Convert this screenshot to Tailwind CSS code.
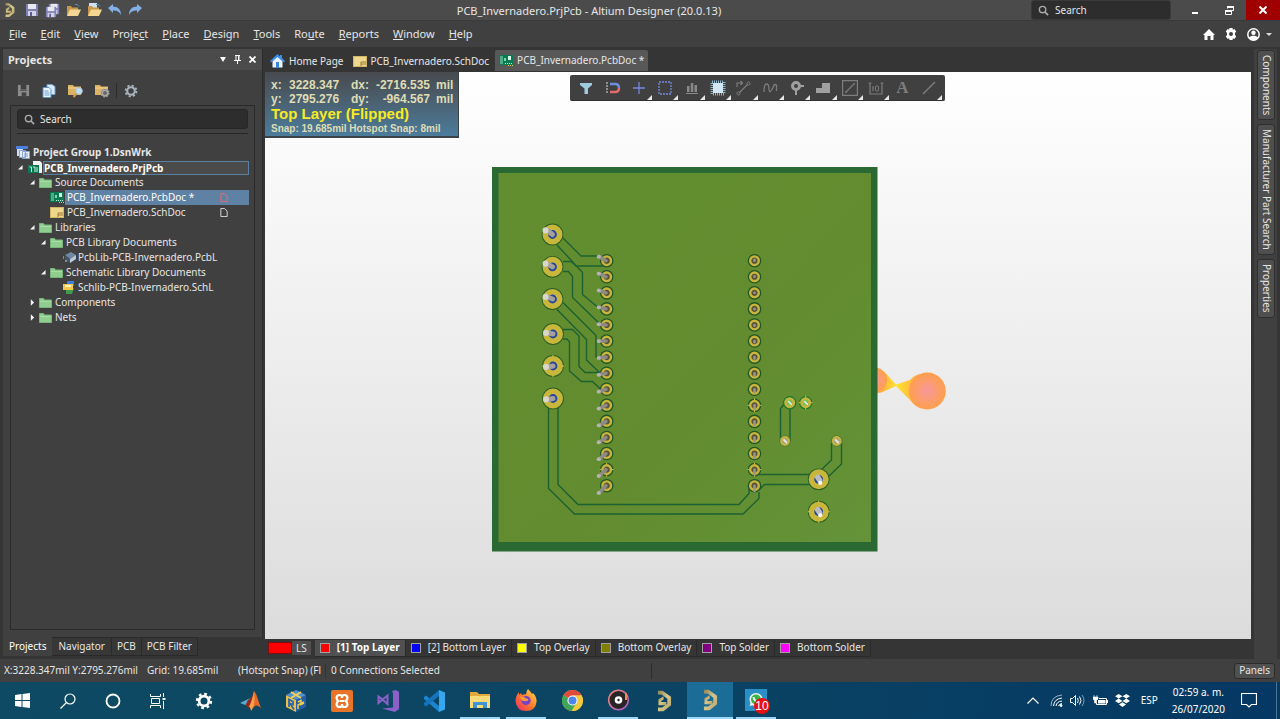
<!DOCTYPE html>
<html lang="en">
<head>
<meta charset="utf-8">
<title>PCB_Invernadero.PrjPcb - Altium Designer (20.0.13)</title>
<script src="https://cdn.jsdelivr.net/npm/@tailwindcss/browser@4"></script>
</head>
<body class="h-screen overflow-hidden flex flex-col bg-[#353535] text-[#e6e6e6] text-[10px] leading-[15px] font-['Noto_Sans',sans-serif]">

<!-- Shared symbols -->
<svg class="absolute w-0 h-0" aria-hidden="true">
  <defs>
    <linearGradient id="gold" x1="0" y1="0" x2="1" y2="1"><stop offset="0" stop-color="#8f8350"/><stop offset=".5" stop-color="#d6c78c"/><stop offset="1" stop-color="#b3a060"/></linearGradient>
    <linearGradient id="fox" x1="1" y1="0" x2="0" y2="1"><stop offset="0" stop-color="#ffe14a"/><stop offset=".5" stop-color="#ff7b2a"/><stop offset="1" stop-color="#f0286a"/></linearGradient>
    <linearGradient id="ring" x1="0" y1="0" x2="1" y2="1"><stop offset="0" stop-color="#f08a6a"/><stop offset="1" stop-color="#a05ad0"/></linearGradient>
  </defs>
  <symbol id="altium" viewBox="0 0 16 22"><path d="M1 0h5l9 6.500v9L7 22H1v-4h4.500l5.500-4V8.500L5 4H1z" fill="url(#gold)"/><path d="M1.500 15.500V9L7 6v3.500L4.500 11v1H10v3.500z" fill="url(#gold)"/></symbol>
  <symbol id="folder" viewBox="0 0 13 11"><path d="M.500 1.500h4l1 1.500h7v7.500h-12z" fill="#8fce8f" stroke="#79b57a"/><path d="M1 4.500h11" stroke="#a9dfa7"/></symbol>
  <symbol id="pcb" viewBox="0 0 14 11"><rect x="0" y="0" width="14" height="10" fill="#0b7a50"/><path d="M1 2h3M1 4h3M1 6h3M1 8h3" stroke="#8fe0bd"/><rect x="5" y="3" width="2" height="3" fill="#7ed3ae"/><rect x="9" y="1" width="3" height="4" fill="#d6f5e6"/><path d="M6 8.500h7" stroke="#c4efdc" stroke-dasharray="1 1"/><path d="M9 10.500h5" stroke="#e6c85a" stroke-dasharray="1 1"/></symbol>
  <symbol id="sch" viewBox="0 0 14 11"><rect x=".5" y=".5" width="13" height="10" fill="#f0d78e" stroke="#d4b765"/><path d="M8 6h5M8 8h5M8 6v4" stroke="#9d7a35"/></symbol>
  <symbol id="tri-open" viewBox="0 0 6 6"><path d="M5.500 0v5.500H0z" fill="#f4f4f4"/></symbol>
  <symbol id="tri-shut" viewBox="0 0 6 8"><path d="M1 0l4 4-4 4z" fill="#f4f4f4"/></symbol>
  <symbol id="doc" viewBox="0 0 8 10"><path d="M.5.5h4l3 3v6h-7z" fill="none" stroke="currentColor"/></symbol>
  <symbol id="lens" viewBox="0 0 12 12"><circle cx="5" cy="5" r="3.500" fill="none" stroke="#a9a9a9" stroke-width="1.500"/><path d="M7.500 7.500L11 11" stroke="#a9a9a9" stroke-width="1.800"/></symbol>
  <symbol id="floppy" viewBox="0 0 14 14"><path d="M1 1h12v12H1z" fill="#7f7fb5"/><path d="M3 1h8v5H3z" fill="#e8e8f2"/><path d="M3 8h8v5H3z" fill="#d2d2e4"/><path d="M5 9h2v4H5z" fill="#5c5c92"/></symbol>
  <symbol id="open" viewBox="0 0 15 14"><path d="M1 3h4l1 1.500h6V13H1z" fill="#c79a4a"/><path d="M4 6.500h11L12 13H1z" fill="#f3d594"/><path d="M9 1.500q3-1 4 2" fill="none" stroke="#5f8fb0"/></symbol>
  <symbol id="cog" viewBox="0 0 20 20"><circle cx="10" cy="10" r="5.400" fill="none" stroke="currentColor" stroke-width="3"/><circle cx="10" cy="10" r="7.800" fill="none" stroke="currentColor" stroke-width="2.600" stroke-dasharray="3.060 3.060"/></symbol>
</svg>

<!-- Title bar -->
<header class="h-[21px] shrink-0 flex items-center bg-[#4b4b4b] border-b border-[#3a3a3a] relative">
  <div class="flex items-center gap-[6px] pl-[4px]">
    <svg class="w-[12px] h-[14px]"><use href="#altium"/></svg>
    <button aria-label="Save" class="ml-[3px]"><svg class="w-[14px] h-[14px]"><use href="#floppy"/></svg></button>
    <button aria-label="Save all"><svg class="w-[15px] h-[15px]" viewBox="0 0 15 15"><use href="#floppy" x="3" y="0" width="12" height="12"/><use href="#floppy" x="0" y="3" width="12" height="12"/></svg></button>
    <button aria-label="Open"><svg class="w-[15px] h-[14px]"><use href="#open"/></svg></button>
    <button aria-label="Open project"><svg class="w-[15px] h-[14px]" viewBox="0 0 15 14"><path d="M2 0h8v8H2z" fill="#cfe0ef"/><use href="#open" width="15" height="14"/></svg></button>
    <button aria-label="Undo"><svg class="w-[14px] h-[12px]" viewBox="0 0 14 12"><path d="M0 4l5-4v2.500c5 0 8 3 8 8.500-2-3.500-4-4.500-8-4.500V9z" fill="#83aee6"/></svg></button>
    <button aria-label="Redo"><svg class="w-[14px] h-[12px]" viewBox="0 0 14 12"><path d="M14 4L9 0v2.500C4 2.500 1 5.500 1 11c2-3.500 4-4.500 8-4.500V9z" fill="#83aee6"/></svg></button>
  </div>
  <h1 class="absolute inset-x-0 text-center text-[11px] pointer-events-none pr-[102px]">PCB_Invernadero.PrjPcb - Altium Designer (20.0.13)</h1>
  <label class="ml-auto w-[140px] h-[20px] flex items-center gap-[6px] bg-[#2d2d2d] border border-[#3a3a3a] rounded-[3px] pl-[6px]">
    <svg class="w-[11px] h-[11px] shrink-0"><use href="#lens"/></svg>
    <input aria-label="Search" placeholder="Search" class="w-full bg-transparent placeholder:text-[#e6e6e6] outline-none">
  </label>
  <button aria-label="Minimize" class="ml-[7px] w-[34px] h-[20px] flex justify-center items-center"><svg class="w-[6px] h-[8px]" viewBox="0 0 6 8"><path d="M0 6h6v2H0z" fill="#fff"/></svg></button>
  <button aria-label="Restore" class="w-[34px] h-[20px] flex justify-center items-center"><svg class="w-[9px] h-[9px]" viewBox="0 0 9 9"><path d="M2.500 2.500v-2h6v4h-2M.5 4.500h6v4h-6z" fill="none" stroke="#fff"/><path d="M2 1h7M0 5h7" stroke="#fff" stroke-width="2"/></svg></button>
  <button aria-label="Close" class="w-[34px] h-[20px] bg-[#a10000] flex justify-center items-center"><svg class="w-[8px] h-[8px]" viewBox="0 0 8 8"><path d="M.5.5l7 7M7.500.5l-7 7" stroke="#fff" stroke-width="2"/></svg></button>
</header>

<!-- Menu bar -->
<nav class="h-[26px] shrink-0 flex items-center gap-[14px] pl-[9px] pr-[8px] bg-[#404040] text-[11px] leading-[14px]">
  <button><u>F</u>ile</button><button><u>E</u>dit</button><button><u>V</u>iew</button><button>Proje<u>c</u>t</button><button><u>P</u>lace</button><button><u>D</u>esign</button><button><u>T</u>ools</button><button>Ro<u>u</u>te</button><button><u>R</u>eports</button><button><u>W</u>indow</button><button><u>H</u>elp</button>
  <div class="ml-auto flex items-center gap-[10px]">
    <button aria-label="Home"><svg class="w-[12px] h-[11px]" viewBox="0 0 12 11"><path d="M6 0l6 6h-1.500v5h-3V7h-3v4h-3V6H0z" fill="#fff"/></svg></button>
    <button aria-label="Preferences"><svg class="w-[12px] h-[12px]" viewBox="0 0 12 12"><path fill-rule="evenodd" d="M4.500 0h3l.4 1.800 1.500-.7L11.200 3.600 10 5v2l1.200 1.400-1.800 2.500-1.500-.7L7.500 12h-3l-.4-1.800-1.500.7L.8 8.400 2 7V5L.8 3.600l1.800-2.500 1.500.7zM6 4a2 2 0 1 0 0 4 2 2 0 0 0 0-4z" fill="#fff"/></svg></button>
    <button aria-label="Account" class="flex items-center gap-[6px]"><svg class="w-[13px] h-[13px]" viewBox="0 0 13 13"><circle cx="6.500" cy="6.500" r="5.700" fill="none" stroke="#fff" stroke-width="1.500"/><circle cx="6.500" cy="4.800" r="2.200" fill="#fff"/><path d="M2 9.500c2-2.500 7-2.500 9 0-2 3.500-7 3.500-9 0z" fill="#fff"/></svg><svg class="w-[6px] h-[3px]" viewBox="0 0 6 3"><path d="M0 0h6L3 3z" fill="#ddd"/></svg></button>
  </div>
</nav>

<main class="flex-1 min-h-0 flex">

  <!-- Projects panel -->
  <aside class="w-[265px] shrink-0 flex flex-col pt-[2px] pl-[3px] pr-[2px]">
    <section class="flex-1 min-h-0 flex flex-col bg-[#404040] border-r border-[#2b2b2b]">
      <div class="h-[21px] shrink-0 flex items-center bg-[#4b4b4b] pl-[5px] pr-[6px]">
        <h2 class="font-bold text-[11px]">Projects</h2>
        <div class="ml-auto flex items-center gap-[8px]">
          <button aria-label="Panel menu"><svg class="w-[6px] h-[5px]" viewBox="0 0 6 5"><path d="M0 0h6L3 5z" fill="#fff"/></svg></button>
          <button aria-label="Pin"><svg class="w-[7px] h-[9px]" viewBox="0 0 7 9"><path d="M1 .5h5M2 0v5M5 0v5M4.500 0v5M0 5.500h7M3.500 5v4" stroke="#fff"/></svg></button>
          <button aria-label="Close panel"><svg class="w-[7px] h-[7px]" viewBox="0 0 7 7"><path d="M.5.500l6 6M6.500.5l-6 6" stroke="#fff" stroke-width="1.800"/></svg></button>
        </div>
      </div>
      <div class="h-[35px] shrink-0 flex items-center pt-[6px] pl-[14px]">
        <button aria-label="Save project"><svg class="w-[13px] h-[13px]" viewBox="0 0 14 14"><path d="M1 1h12v12H1z" fill="#8c8c8c"/><path d="M4 1h6v5H4z" fill="#404040"/><path d="M3 7h8" stroke="#555"/><path d="M5 9h5v4H5z" fill="#444"/></svg></button>
        <button aria-label="Compile" class="ml-[12px]"><svg class="w-[14px] h-[14px]" viewBox="0 0 14 14"><path d="M5 .5h5l3 2v8H5z" fill="#d9eaf9" stroke="#6a9fd0"/><path d="M1 3.500h6l2 2v8H1z" fill="#eaf4fc" stroke="#5b93c7"/><path d="M2.500 7h4M2.500 9h5M2.500 11h5" stroke="#6c9fcf"/></svg></button>
        <button aria-label="Explore" class="ml-[12px]"><svg class="w-[15px] h-[14px]" viewBox="0 0 15 14"><path d="M0 1h5l1 1.500h7V11H0z" fill="#dcb362"/><path d="M0 4h13" stroke="#f2d694"/><circle cx="11" cy="7" r="3.300" fill="#c4dff1" stroke="#a9c3d6"/><path d="M8.500 9.500L5.500 13" stroke="#d79b4a" stroke-width="2"/></svg></button>
        <button aria-label="Project options" class="ml-[12px] text-[#a8a8a8]"><svg class="w-[15px] h-[14px]" viewBox="0 0 15 14"><path d="M0 1h5l1 1.500h7V11H0z" fill="#dcb362"/><path d="M0 4h13" stroke="#f2d694"/><circle cx="10" cy="9" r="4" fill="#666"/><use href="#cog" x="5" y="4" width="10" height="10"/></svg></button>
        <span class="ml-[6px] w-px h-[15px] bg-[#2b2b2b]"></span>
        <button aria-label="Settings" class="ml-[7px] text-[#a9b4bf]"><svg class="w-[14px] h-[14px]"><use href="#cog"/></svg></button>
      </div>
      <div class="flex-1 min-h-0 mx-[7px] border border-[#2a2a2a]">
        <label class="mx-[6px] mt-[3px] h-[20px] flex items-center gap-[5px] bg-[#2d2d2d] border border-[#272727] rounded-[3px] pl-[6px]">
          <svg class="w-[11px] h-[11px] shrink-0"><use href="#lens"/></svg>
          <input aria-label="Search projects" placeholder="Search" class="w-full bg-transparent placeholder:text-[#e6e6e6] outline-none">
        </label>
        <div class="mx-[6px] mt-[4px] h-px bg-[#262626]"></div>
        <ul class="mt-[11px] ml-[5px] mr-[5px]">
          <li class="h-[15px] flex items-center gap-[3px] font-bold"><svg class="w-[14px] h-[13px]" viewBox="0 0 14 13"><path d="M0 0h12v3H0z" fill="#4b7ee0"/><path d="M1 3h6v7H1z" fill="#cfdcf3"/><path d="M3.500 4.500h6v7h-6zM6.500 5.500h7v7h-7z" fill="#e9effa" stroke="#8ba3cf"/><path d="M8 8h4M8 10h4" stroke="#7c98cf"/></svg>Project Group 1.DsnWrk</li>
          <li class="h-[15px] flex items-center pl-[2px] font-bold text-white"><svg class="w-[5px] h-[5px]"><use href="#tri-open"/></svg><svg class="w-[14px] h-[13px] ml-[5px]" viewBox="0 0 14 13"><path d="M5 0h7l2 2v10H5z" fill="#f4f4f4"/><path d="M0 4h11v8H0z" fill="#0b7a50"/><path d="M1.500 6h2v5M5 6h2v5M9 6v5" fill="none" stroke="#c5efdc"/></svg><span class="flex-1 h-[14px] leading-[12px] border border-[#5b7f9f] bg-[#4b4b4b] ml-px">PCB_Invernadero.PrjPcb</span></li>
          <li class="h-[15px] flex items-center pl-[14px]"><svg class="w-[5px] h-[5px]"><use href="#tri-open"/></svg><svg class="w-[13px] h-[11px] ml-[4px] mr-[3px]"><use href="#folder"/></svg>Source Documents</li>
          <li class="h-[15px] flex items-center pl-[34px]"><svg class="w-[14px] h-[11px]"><use href="#pcb"/></svg><span class="flex-1 flex items-center h-[15px] bg-[#5f81a3] text-white ml-px pl-[2px] pr-[21px]">PCB_Invernadero.PcbDoc *<svg class="w-[8px] h-[9px] ml-auto text-[#ee6a70]"><use href="#doc"/></svg></span></li>
          <li class="h-[15px] flex items-center pl-[34px] pr-[21px]"><svg class="w-[14px] h-[11px] mr-[3px]"><use href="#sch"/></svg>PCB_Invernadero.SchDoc<svg class="w-[8px] h-[9px] ml-auto text-[#e4e4e4]"><use href="#doc"/></svg></li>
          <li class="h-[15px] flex items-center pl-[14px]"><svg class="w-[5px] h-[5px]"><use href="#tri-open"/></svg><svg class="w-[13px] h-[11px] ml-[4px] mr-[3px]"><use href="#folder"/></svg>Libraries</li>
          <li class="h-[15px] flex items-center pl-[25px]"><svg class="w-[5px] h-[5px]"><use href="#tri-open"/></svg><svg class="w-[13px] h-[11px] ml-[4px] mr-[3px]"><use href="#folder"/></svg>PCB Library Documents</li>
          <li class="h-[15px] flex items-center pl-[47px]"><svg class="w-[13px] h-[11px] mr-[2px]" viewBox="0 0 13 11"><path d="M2 3l6-3 5 3-6 4z" fill="#6e8aa0"/><path d="M2 3l5 4v4L2 8z" fill="#40566a"/><path d="M7 7l6-4v4l-6 4z" fill="#b9cad8"/><path d="M0 4v3M3 8v2" stroke="#c5d3df"/></svg>PcbLib-PCB-Invernadero.PcbL</li>
          <li class="h-[15px] flex items-center pl-[25px]"><svg class="w-[5px] h-[5px]"><use href="#tri-open"/></svg><svg class="w-[13px] h-[11px] ml-[4px] mr-[3px]"><use href="#folder"/></svg>Schematic Library Documents</li>
          <li class="h-[15px] flex items-center pl-[46px]"><svg class="w-[13px] h-[13px] mr-[3px]" viewBox="0 0 13 13"><path d="M5 0h7v5H5z" fill="#3c7de0"/><path d="M4 8l8-1-2 6H4z" fill="#3f9c4c"/><path d="M1 3h10v6H1z" fill="#f2c94a"/><path d="M3 5h6" stroke="#fff5c4" stroke-width="2"/></svg>Schlib-PCB-Invernadero.SchL</li>
          <li class="h-[15px] flex items-center pl-[14px]"><svg class="w-[5px] h-[7px]"><use href="#tri-shut"/></svg><svg class="w-[13px] h-[11px] ml-[4px] mr-[3px]"><use href="#folder"/></svg>Components</li>
          <li class="h-[15px] flex items-center pl-[14px]"><svg class="w-[5px] h-[7px]"><use href="#tri-shut"/></svg><svg class="w-[13px] h-[11px] ml-[4px] mr-[3px]"><use href="#folder"/></svg>Nets</li>
        </ul>
      </div>
      <div class="h-[7px] shrink-0"></div>
    </section>
    <div class="h-[22px] shrink-0 flex items-start">
      <button class="h-[19px] px-[6px] bg-[#404040] text-white">Projects</button>
      <button class="h-[19px] px-[6px] border border-l-0 border-[#2a2a2a] bg-[#373737]">Navigator</button>
      <button class="h-[19px] px-[5px] border border-l-0 border-[#2a2a2a] bg-[#373737]">PCB</button>
      <button class="h-[19px] px-[5px] border border-l-0 border-[#2a2a2a] bg-[#373737]">PCB Filter</button>
    </div>
  </aside>

  <!-- Editor -->
  <section class="flex-1 min-w-0 flex flex-col pt-[3px]">
    <div class="h-[22px] shrink-0 flex items-stretch pl-[5px]">
      <button class="flex items-center gap-[4px] pr-[9px]"><svg class="w-[15px] h-[14px]" viewBox="0 0 15 14"><path d="M2.500 7v6.500h10V7L7.500 2z" fill="#e9f4ff"/><path d="M7.500 0L0 7l1 1.500L7.500 3 14 8.500 15 7l-3-3V1h-2v1.500z" fill="#3c8ee8"/><path d="M6 8h3v6H6z" fill="#3b86dc"/></svg>Home Page</button>
      <button class="flex items-center gap-[4px] pr-[6px]"><svg class="w-[14px] h-[11px]"><use href="#sch"/></svg>PCB_Invernadero.SchDoc</button>
      <button class="flex items-center gap-[4px] px-[4px] mb-px rounded-t-[2px] bg-[#585858]"><svg class="w-[14px] h-[11px]"><use href="#pcb"/></svg>PCB_Invernadero.PcbDoc *</button>
    </div>

    <div class="flex-1 min-h-0 relative bg-linear-to-b from-white to-[#dcdcdc]">
      <svg class="w-full h-full block" viewBox="265 72 986 567" role="img" aria-label="Board view">
        <defs>
          <radialGradient id="ball"><stop offset="0" stop-color="#f7989c"/><stop offset="1" stop-color="#ff9f4c"/></radialGradient>
          <linearGradient id="cone" x1="0" x2="1"><stop offset="0" stop-color="#ffa04a"/><stop offset=".45" stop-color="#ffe32c"/><stop offset="1" stop-color="#ff9f4c"/></linearGradient>
          <linearGradient id="mask" x1="0" y1="0" x2="1" y2="1"><stop offset="0" stop-color="#628e30"/><stop offset=".6" stop-color="#628c2f"/><stop offset="1" stop-color="#659339"/></linearGradient>
          <g id="pad-s"><circle r="6.800" fill="#1f5729"/><circle r="4.300" fill="#555238" stroke="#c9b53c" stroke-width="2.400"/></g>
          <g id="pad-l"><circle r="10.900" fill="#2a5f26"/><circle r="7.200" fill="#26449e" stroke="#c9b73b" stroke-width="5.600"/></g>
        </defs>
        <path d="M877 367.500Q884 370 889 377L896 384.500 910 380Q914 375 921 374L921 408.500Q914 406 910 400L896 386 886 390.500Q881 393 877 393z" fill="url(#cone)"/>
        <circle cx="875" cy="380" r="12" fill="url(#ball)"/>
        <circle cx="927.300" cy="391" r="18.500" fill="url(#ball)"/>
        <rect x="492" y="167" width="385.500" height="384.500" fill="#2b6933"/>
        <rect x="498.500" y="173" width="372.500" height="369" fill="url(#mask)"/>
        <g fill="none" stroke="#1c6131" stroke-width="1.400">
          <path d="M563 238L581 256H600M557 245L582.500 272.500V294.500L600 309M563 261.500H571L576 266H603M563 271.500H568.500L572.500 276.500V297.500L601 325M563 302.500L596 335.500V357L604 358M557 309.500L586.500 339.500V360L600 373M563 329.500H572.500L579 336V366.500L585 372.500H601M563 339H567L569.500 342V371L581.500 381.500H592.500L601 389.500"/>
          <path d="M548.500 405V488.500L574.500 514H743L759 498.500V492M558 405V484.500L578 504.500H739L749 493.500V488M759 490L764.500 484.500H812M759 474.500H812M821 470L831.500 460V443M829 476L841.500 464V443M786 402L780.500 408.500V441M790 406V441"/>
        </g>
        <g id="pads"></g>
      </svg>

      <div class="absolute left-0 top-0 w-[194px] h-[66px] pt-[6px] pl-[6px] border-b-2 border-r border-[#3c4348] bg-linear-to-b from-[#474a4d] to-[#4b7c9c] font-['Liberation_Sans',sans-serif] font-bold text-[#dfdcb4]">
        <div class="grid grid-cols-[18px_59px_24px_60px_1fr] text-[12px] leading-[14px] whitespace-pre"><span>x:</span><span>3228.347</span><span class="pl-[3px]">dx:</span><span class="text-right pr-[2px]">-2716.535</span><span class="pl-[4px]">mil</span><span>y:</span><span>2795.276</span><span class="pl-[3px]">dy:</span><span class="text-right pr-[2px]">-964.567</span><span class="pl-[4px]">mil</span></div>
        <p class="text-[15px] leading-[16px] text-[#f6ec22]">Top Layer (Flipped)</p>
        <p class="text-[10px] leading-[13px] whitespace-nowrap">Snap: 19.685mil Hotspot Snap: 8mil</p>
      </div>

      <div id="tools" class="absolute left-[305px] top-[3px] w-[375px] h-[26px] px-[3px] flex bg-[#404040] rounded-[2px] border-b border-[#303030]"></div>
    </div>

    <div class="h-[20px] shrink-0 flex items-center pl-[3px] pb-[2px]">
      <button class="w-[24px] h-[12px] bg-[#fe0000] border border-[#7a1010]" aria-label="Current layer"></button>
      <button class="h-[14px] px-[4px] bg-[#505050] leading-[14px] mr-[4px]">LS</button>
      <div id="layers" class="flex"></div>
    </div>
  </section>

  <!-- Docked tabs -->
  <aside class="w-[29px] shrink-0 pt-[2px] pl-[3px] pr-[3px]">
    <div class="h-full bg-[#404040] pl-[3px] pr-[2px] flex flex-col gap-[4px] pt-[1px]">
      <button class="py-[4px] flex justify-center bg-[#4f4f4f] border border-[#2f2f2f] rounded-[3px]"><span class="[writing-mode:vertical-rl]">Components</span></button>
      <button class="py-[4px] flex justify-center bg-[#4f4f4f] border border-[#2f2f2f] rounded-[3px]"><span class="[writing-mode:vertical-rl]">Manufacturer Part Search</span></button>
      <button class="py-[4px] flex justify-center bg-[#4f4f4f] border border-[#2f2f2f] rounded-[3px]"><span class="[writing-mode:vertical-rl]">Properties</span></button>
    </div>
  </aside>
</main>

<!-- Status bar -->
<footer class="h-[23px] shrink-0 flex items-center bg-[#404040] pl-[4px] pr-[5px] whitespace-nowrap">
  <span class="w-[143px]">X:3228.347mil Y:2795.276mil</span>
  <span class="w-[91px]">Grid: 19.685mil</span>
  <span class="w-[88px] border-r border-[#333]">(Hotspot Snap) (Fl</span>
  <span class="w-[326px] h-[16px] pl-[5px] border-r border-[#2c2c2c]">0 Connections Selected</span>
  <button class="ml-auto h-[16px] px-[4px] bg-[#505050] border border-[#2c2c2c] rounded-[3px] leading-[13px]">Panels</button>
</footer>

<!-- Windows taskbar -->
<div class="h-[37px] shrink-0 flex bg-linear-to-r from-[#0e4a63] via-[#0b4463] to-[#053863] text-white">
  <div class="flex">
    <button aria-label="Start" class="w-[45px] flex items-center justify-center"><svg class="w-[15px] h-[15px]" viewBox="0 0 15 15"><path d="M0 2l6.500-1v6H0zM7.500 1L15 0v7H7.500zM0 8h6.500v6L0 13zM7.500 8H15v7l-7.500-1z" fill="#fff"/></svg></button>
    <button aria-label="Search" class="w-[45px] flex items-center justify-center"><svg class="w-[16px] h-[16px]" viewBox="0 0 16 16"><circle cx="10" cy="6" r="5" fill="none" stroke="#fff" stroke-width="1.200"/><path d="M6.500 9.500L.5 15.500" stroke="#fff" stroke-width="1.200"/></svg></button>
    <button aria-label="Cortana" class="w-[45px] flex items-center justify-center"><svg class="w-[16px] h-[16px]" viewBox="0 0 16 16"><circle cx="8" cy="8" r="6.500" fill="none" stroke="#fff" stroke-width="1.800"/></svg></button>
    <button aria-label="Task view" class="w-[45px] flex items-center justify-center"><svg class="w-[16px] h-[16px]" viewBox="0 0 16 16" fill="none" stroke="#fff"><path d="M.5 1v2.500h10V1M.5 15v-2.500h10V15M1.500 5.500h8v5h-8zM13.500 0v4M13.500 8v8"/><path d="M12.500 6h3" stroke-width="2"/></svg></button>
    <button aria-label="Settings" class="ml-px w-[46px] flex items-center justify-center"><svg class="w-[18px] h-[18px]"><use href="#cog"/></svg></button>
    <button aria-label="MATLAB" class="w-[46px] flex items-center justify-center"><svg class="w-[21px] h-[20px]" viewBox="0 0 21 20"><path d="M0 12l6-3 5-2-3 8z" fill="#5aa7cf"/><path d="M8 9q4-2 6.500-9l-3 13q-1 3-3 4l-3-3z" fill="#8e2b1c"/><path d="M14 0q2 2 3.500 7T21 17q-3-3-5-2.500T11 20q0-4-2-4.500Q12 11 14 0z" fill="#e5682a"/><path d="M14 0q1 8 0 14l-3 6q-.5-4-2-4.500Q12 11 14 0z" fill="#f5a04a"/></svg></button>
    <button aria-label="RobotStudio" class="w-[46px] flex items-center justify-center"><svg class="w-[20px] h-[22px]" viewBox="0 0 20 22"><path d="M0 5l10 5v12L0 17z" fill="#edc047"/><path d="M10 10l10-5v12l-10 5z" fill="#245fa8"/><path d="M10 0l10 5-10 5L0 5z" fill="#4f92cf"/><path d="M5 2l10 6M15 2L5 8" stroke="#f3d058" stroke-width="2"/><path d="M3 17V9.500l4 2v3l-3-1 4 6" fill="none" stroke="#2d67ab" stroke-width="1.800"/><path d="M12 12l3-1.500v4l3-1.500M12 19v-4l6-3" fill="none" stroke="#f0cc4d" stroke-width="1.500"/></svg></button>
    <button aria-label="XAMPP" class="w-[46px] flex items-center justify-center"><svg class="w-[22px] h-[22px]" viewBox="0 0 22 22"><rect width="22" height="22" rx="2" fill="#e8742a"/><path d="M11 8V7Q11 5 8.500 5T5.500 7.500Q5.500 9 7 11 5.500 13 5.500 14.500 6 17 8.500 17T11 15V14M11 8V7Q11 5 13.500 5t3 2.500Q16.500 9 15 11q1.500 2 1.500 3.500-.5 2.500-3 2.500T11 15M8.500 11h5" fill="none" stroke="#fff" stroke-width="2.200"/></svg></button>
    <button aria-label="Visual Studio" class="w-[46px] flex items-center justify-center"><svg class="w-[22px] h-[22px]" viewBox="0 0 22 22"><path d="M15 1l4-1 3 2v17L18 22 5 18.500l11-1V3z" fill="#8b61c9"/><path d="M1.500 6.500v6.500l4-3.500 5 4.500V5.500l-5 4z" fill="none" stroke="#8b61c9" stroke-width="2"/></svg></button>
    <button aria-label="Visual Studio Code" class="w-[46px] flex items-center justify-center"><svg class="w-[22px] h-[22px]" viewBox="0 0 22 22"><path d="M1 7l2-1.500L16 16v6L1 9z" fill="#1b86cf"/><path d="M1 15l2 1.500L16 6V0L1 13z" fill="#1574bd"/><path d="M16 0l6 2.500v17L16 22z" fill="#37a8ef"/></svg></button>
    <button aria-label="File Explorer" class="w-[46px] flex items-center justify-center border-b-2 border-[#9ed6f5] [border-image:linear-gradient(90deg,transparent_4px,#9ed6f5_4px,#9ed6f5_42px,transparent_42px)_1]"><svg class="w-[20px] h-[18px]" viewBox="0 0 20 18"><path d="M0 1h7l2 2h11v5H0z" fill="#e2a93c"/><path d="M0 5h20v12H0z" fill="#fbda7a"/><path d="M3 17v-6h14v6h-4v-3H7v3z" fill="#3d93d3"/></svg></button>
    <button aria-label="Firefox" class="w-[46px] flex items-center justify-center border-b-2 border-[#9ed6f5] [border-image:linear-gradient(90deg,transparent_4px,#9ed6f5_4px,#9ed6f5_42px,transparent_42px)_1]"><svg class="w-[22px] h-[22px]" viewBox="0 0 22 22"><path d="M13 0q3 3 4 5l1-1q4 4 3.500 9-1 9-10.500 9T.5 12Q.5 7 4 3v3l2-2 1 2q2-1 4-.500Q11 2 13 0z" fill="url(#fox)"/><circle cx="11" cy="11.500" r="4.600" fill="#7542c8"/><path d="M5 8q4-1 6 1.500 3 0 2 2-2 1-4 .5Q6 12 5 8z" fill="#ff9a3a"/></svg></button>
    <button aria-label="Chrome" class="w-[46px] flex items-center justify-center"><svg class="w-[21px] h-[21px]" viewBox="0 0 22 22"><circle cx="11" cy="11" r="11" fill="#f2c93f"/><path d="M11 11L1.500 5.500A11 11 0 0 1 20.500 5.500z" fill="#df4a3c"/><path d="M11 11L1.500 5.500A11 11 0 0 0 10 22l5-8.500z" fill="#3fa657"/><path d="M11 5.500h9.500a11 11 0 0 1-10 16.500l5-9z" fill="#f2c93f"/><circle cx="11" cy="11" r="5.300" fill="#fff"/><circle cx="11" cy="11" r="4.200" fill="#4b86e8"/></svg></button>
    <button aria-label="Music player" class="w-[46px] flex items-center justify-center border-b-2 border-[#9ed6f5] [border-image:linear-gradient(90deg,transparent_4px,#9ed6f5_4px,#9ed6f5_42px,transparent_42px)_1]"><svg class="w-[23px] h-[22px]" viewBox="0 0 23 22"><circle cx="11.500" cy="11" r="9.800" fill="#2a2426" stroke="url(#ring)" stroke-width="1.600"/><path d="M19 4v7" stroke="#f08a5a" stroke-width="2"/><circle cx="11.500" cy="11" r="3.800" fill="#fff"/><circle cx="11.500" cy="11" r="1.200" fill="#222"/></svg></button>
    <button aria-label="Altium Designer" class="w-[46px] flex items-center justify-center"><svg class="w-[15px] h-[22px]"><use href="#altium"/></svg></button>
    <button aria-label="Altium Designer, active" class="w-[46px] flex items-center justify-center bg-[#1c6c98] border-b-2 border-[#9ed6f5]"><svg class="w-[15px] h-[22px]"><use href="#altium"/></svg></button>
    <button aria-label="WhatsApp" class="w-[46px] flex items-center justify-center border-b-2 border-[#9ed6f5] [border-image:linear-gradient(90deg,transparent_4px,#9ed6f5_4px,#9ed6f5_42px,transparent_42px)_1]"><span class="relative"><svg class="w-[22px] h-[22px]" viewBox="0 0 22 22"><path d="M0 0h22v22H0z" fill="#2a8fc7"/><circle cx="11" cy="10.500" r="5.800" fill="#39b54a" stroke="#e6f5ea" stroke-width="1.500"/><path d="M4.500 17l1.500-4 3 3z" fill="#e6f5ea"/><path d="M8.500 8q.5 4.500 5 5" fill="none" stroke="#fff" stroke-width="2"/></svg><span class="absolute left-[9px] top-[9px] w-[16px] h-[16px] rounded-full bg-[#e81010] text-center text-[12px] leading-[16px] font-['Liberation_Sans',sans-serif]">10</span></span></button>
  </div>
  <div class="ml-auto flex items-center">
    <button aria-label="Hidden icons"><svg class="w-[12px] h-[7px]" viewBox="0 0 12 7"><path d="M.500 6.500L6 1l5.500 5.500" fill="none" stroke="#fff" stroke-width="1.200"/></svg></button>
    <svg class="w-[13px] h-[13px] ml-[11px]" viewBox="0 0 13 13" fill="none" stroke="#fff"><path d="M1 12Q1 2 12 1" opacity=".6"/><path d="M3.500 12Q4 5 12 4M6 12q.5-4.500 6-5M8.500 12q.5-2 3.500-2.500"/><circle cx="11" cy="11.500" r="1" fill="#fff"/></svg>
    <svg class="w-[15px] h-[13px] ml-[7px]" viewBox="0 0 15 13" fill="none" stroke="#fff"><path d="M.5 4.500h2l3-3v10l-3-3h-2zM7.500 4q1.500 2.500 0 5M9.500 2.500q3 4 0 8"/><path d="M12 1q4 5.500 0 11" opacity=".5"/></svg>
    <svg class="w-[15px] h-[12px] ml-[8px]" viewBox="0 0 15 12"><path d="M1 0v2M4 0v2M0 2h5v2L3.500 5.500V8h-2V5.500L0 4z" fill="#fff" stroke="#fff" stroke-width=".6"/><path d="M6 3.500h7.500v6H3.500V8" fill="none" stroke="#fff"/><path d="M5 5h7.500v3.500H5zM14 5h1v3h-1z" fill="#fff"/></svg>
    <svg class="w-[15px] h-[13px] ml-[7px]" viewBox="0 0 15 13"><path d="M3.700 0l3.800 2.300-3.800 2.300L0 2.300zM11.300 0L15 2.300l-3.700 2.300-3.800-2.300zM3.700 4.600l3.800 2.300-3.800 2.400L0 6.900zM11.300 4.600L15 6.900l-3.700 2.400-3.800-2.400zM7.500 8.300l3.500 2.200L7.500 13 4 10.500z" fill="#fff"/></svg>
    <span class="ml-[11px]">ESP</span>
    <div class="ml-[14px] text-center leading-[17px]"><div>02:59 a.&nbsp;m.</div><div>26/07/2020</div></div>
    <button aria-label="Notifications" class="ml-[16px] mr-[19px]"><svg class="w-[16px] h-[15px]" viewBox="0 0 16 15"><path d="M.5.500h15v11h-5L8 14l-2.500-2.500h-5z" fill="none" stroke="#fff" stroke-width="1.200"/></svg></button>
    <span class="w-px h-full bg-[#4d7290] mr-[3px]"></span>
  </div>
</div>

<script>
  // Pads and component leads of the board
  const use = (id, x, y) => `<use href="#${id}" x="${x}" y="${y}"/>`;
  const line = (x1, y1, x2, y2, w, c) => `<path d="M${x1} ${y1}L${x2} ${y2}" stroke="${c}" stroke-width="${w}" stroke-linecap="round"/>`;
  const spokes = (x, y, r) => `<path d="M${x} ${y - r}v2M${x} ${y + r}v-2M${x - r} ${y}h2M${x + r} ${y}h-2" stroke="#d4c343"/>`;
  let s = '';
  for (let i = 0; i < 15; i++) {
    const y = 260.7 + i * 16.07;
    s += use('pad-s', 606.7, y) + (i === 13 ? spokes(606.7, y, 7) : '');
    s += line(606, y, 600, y - 3.5 + i * 0.7, 3.6, '#8f8983') + line(599, y - 4 + i * 0.8, 598.6, y - 4 + i * 0.8, 3.8, '#b5b2b0');
    s += use('pad-s', 754.5, y) + (i === 9 || i === 13 ? spokes(754.5, y, 7) : '');
    s += line(754.5, y, 754.5, y - 1 + i * 0.45, 2.6, '#9a958c');
  }
  [[552.5, 234.5, -4], [552.5, 266.8, -3], [552.5, 299, -2], [553, 334, -1], [553, 366, 1], [553, 398.5, 1]].forEach(([x, y, d], i) => {
    s += use('pad-l', x, y) + (i === 4 ? spokes(x, y, 11) : '') + line(x, y, x - 5, y + d, 5, '#a5a09c') + line(x - 7, y + d, x - 7, y + d - 0.2, 6, '#d9d6cb');
  });
  [[818.7, 479.3], [818.7, 511.7]].forEach(([x, y], i) => {
    s += use('pad-l', x, y) + (i ? spokes(x, y, 11) : '') + line(x - 1, y - 2, x + 1, y + 1, 5.5, '#b9bcc2') + line(x + 1.5, y + 3.5, x + 1.5, y + 3.6, 4, '#ffffff');
  });
  [[789.7, 402.7, 1], [805.7, 402.7, 1], [785, 441, 0], [836.7, 441, 0]].forEach(([x, y, big], i) => {
    s += `<circle cx="${x}" cy="${y}" r="${big ? 6.8 : 5.8}" fill="${big ? '#1e7a25' : '#4b7a35'}"/><circle cx="${x}" cy="${y}" r="${big ? 5.5 : 4.9}" fill="#c3b443"/>`;
    s += i === 1 ? spokes(x, y, 7) : '';
    s += `<circle cx="${x}" cy="${y}" r="2.600" fill="${big ? '#5fc84a' : '#a79f86'}"/>` + line(x - 1, y - 1, x + 1.5, y + 1.5, 1.8, '#e6e8e4');
  });
  document.getElementById('pads').innerHTML = s;

  // Floating active bar: [label, drawing, has a drop-down corner]
  const tools = [
    ['Filter', '<path d="M2 3h12v2l-4 3.500V14H6.500V8.500L2 5z" fill="#9fcbe0"/>', 0],
    ['Snapping', '<path d="M1 3h2M1 6h2M1 9h2M1 12h2" stroke="#aaa" stroke-width="1.500"/><path d="M5 4h5q4 0 4 4" fill="none" stroke="#6b8fdc" stroke-width="2.500"/><path d="M14 8q0 4-4 4H5" fill="none" stroke="#e06c6c" stroke-width="2.500"/>', 0],
    ['Cross', '<path d="M8 2v12M2 8h12" stroke="#7289de" stroke-width="1.300"/>', 1],
    ['Select area', '<path d="M2 2h12v12H2z" fill="none" stroke="#7289de" stroke-width="1.300" stroke-dasharray="2 1"/>', 1],
    ['Align', '<path d="M2 13.500h12" stroke="#8a8a8a"/><path d="M3 6h2.500v6H3zM6.800 3h2.500v9H6.800zM10.500 5H13v7h-2.500z" fill="#8a8a8a"/>', 1],
    ['Component', '<path d="M2 2h12v12H2z" fill="none" stroke="#8fb3c6" stroke-width="3" stroke-dasharray="1 1"/><path d="M3 3h10v10H3z" fill="#d2e7f2"/>', 1],
    ['Route', '<path d="M3.500 12.500l8-8M1 7V3h5M4.500 1l2 2-2 2" fill="none" stroke="#7d7d7d" stroke-width="1.200"/><circle cx="12.500" cy="3.500" r="1.500" fill="none" stroke="#7d7d7d"/><circle cx="2.500" cy="13.500" r="1.500" fill="none" stroke="#7d7d7d"/>', 1],
    ['Tune', '<path d="M1 12Q1 4 3.500 4T6 9t2.500 1T11 5t2.500 0V11" fill="none" stroke="#7d7d7d" stroke-width="1.300"/>', 1],
    ['Via', '<circle cx="7" cy="6" r="3.500" fill="none" stroke="#a0a0a0" stroke-width="3"/><path d="M7 10v5M11 6h4" stroke="#a0a0a0" stroke-width="2"/>', 1],
    ['Polygon', '<path d="M1 8h6V3h8v10H1z" fill="#a0a0a0"/>', 1],
    ['Rule', '<path d="M.600.600h14.800v14.800H.600zM4.500 11.500l7-7" fill="none" stroke="#7d7d7d" stroke-width="1.200"/><circle cx="4" cy="12" r="1" fill="#7d7d7d"/><circle cx="12" cy="4" r="1" fill="#7d7d7d"/>', 1],
    ['Dimension', '<path d="M2 3v11h12V3M.5 3h3M12.500 3h3M5 6v5" fill="none" stroke="#7d7d7d" stroke-width="1.200"/><rect x="7.500" y="6" width="3" height="5" rx="1" fill="none" stroke="#7d7d7d"/>', 1],
    ['Text', '', 0],
    ['Line', '<path d="M2 14L14 2" stroke="#7d7d7d" stroke-width="1.500"/>', 1]
  ];
  document.getElementById('tools').innerHTML = tools.map(([n, d, c]) =>
    `<button aria-label="${n}" class="flex-1 relative flex items-center justify-center">` +
    (n === 'Text' ? `<span class="font-['Liberation_Serif',serif] text-[17px] text-[#7d7d7d] font-bold">A</span>` : `<svg class="w-[16px] h-[16px]" viewBox="0 0 16 16">${d}</svg>`) +
    (c ? '<svg class="absolute right-0 bottom-0 w-[5px] h-[5px]" viewBox="0 0 5 5"><path d="M5 0v5H0z" fill="#e8e8e8"/></svg>' : '') + '</button>').join('');

  // Layer tabs
  const layers = [['[1] Top Layer', '#fe0000'], ['[2] Bottom Layer', '#0000f5'], ['Top Overlay', '#ffff00'], ['Bottom Overlay', '#808000'], ['Top Solder', '#800080'], ['Bottom Solder', '#ff00ff']];
  document.getElementById('layers').innerHTML = layers.map(([n, c], i) =>
    `<button class="h-[17px] px-[5px] flex items-center gap-[7px] border-r border-b border-[#2a2a2a] ${i ? '' : 'bg-[#505050] text-white font-bold'}"><span class="w-[10px] h-[10px] border border-[#a0a0a0]" style="background:${c}"></span>${n}</button>`).join('');
</script>
</body>
</html>
